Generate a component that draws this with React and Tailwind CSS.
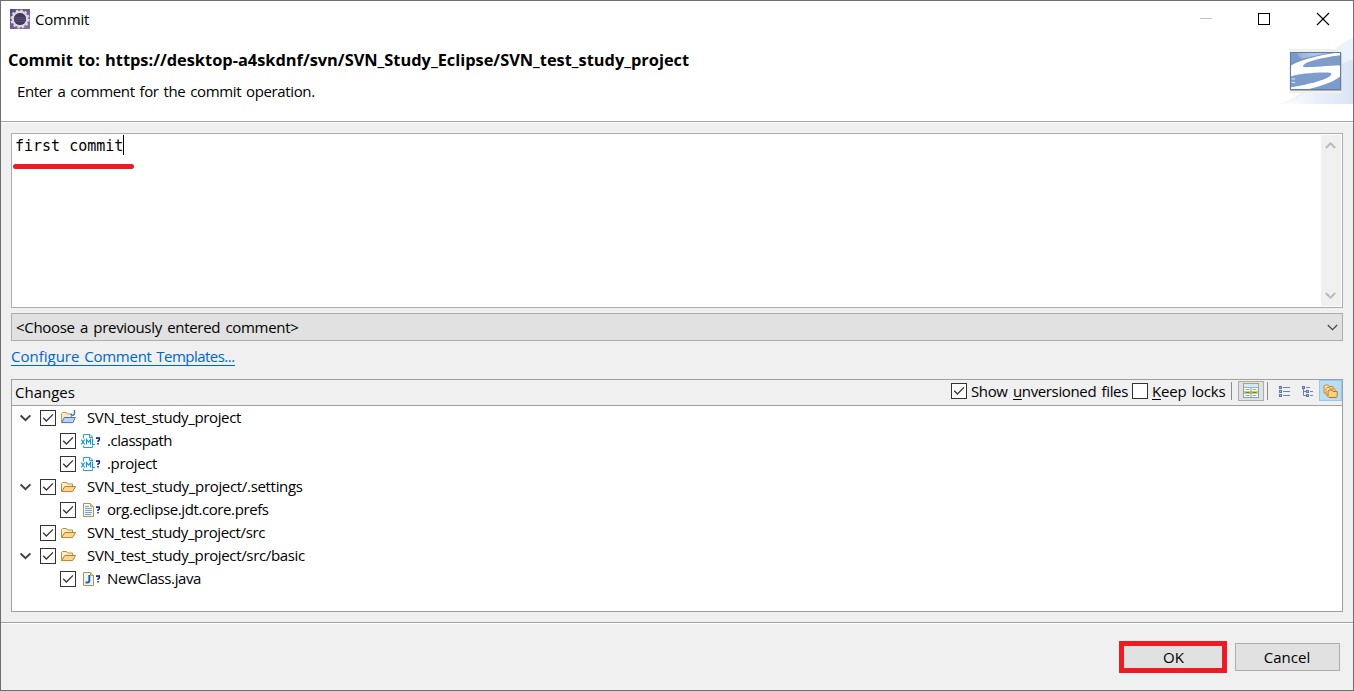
import React from "react";

const EclipseIcon = () => (
  <svg width="20" height="20" viewBox="0 0 20 20" className="shrink-0">
    <defs>
      <linearGradient id="ecl" x1="0" y1="0" x2="1" y2="1">
        <stop offset="0" stopColor="#54467a" />
        <stop offset="1" stopColor="#8a70b0" />
      </linearGradient>
    </defs>
    <rect width="20" height="20" fill="url(#ecl)" />
    <circle cx="10" cy="10" r="8.500" fill="none" stroke="#dcd6e0" strokeWidth="2.200" strokeDasharray="2.500 1.950" />
    <circle cx="10" cy="10" r="7.200" fill="none" stroke="#dedad8" strokeWidth="2.200" />
    <circle cx="10" cy="10" r="6.100" fill="#413a5e" />
    <path d="M4.600 8.600h10.800M4.300 10.500h11.400M4.900 12.400h10.200" stroke="#5d5680" strokeWidth=".8" />
  </svg>
);

const Banner = () => (
  <svg width="74" height="66" viewBox="0 0 74 66" className="shrink-0">
    <defs>
      <linearGradient id="bandA" x1="0" y1="0" x2="1" y2="0">
        <stop offset="0" stopColor="#ffffff" />
        <stop offset=".5" stopColor="#e9effa" />
        <stop offset="1" stopColor="#dbe4f6" />
      </linearGradient>
      <radialGradient id="shine" gradientUnits="userSpaceOnUse" cx="36" cy="12" r="22">
        <stop offset="0" stopColor="#bccae2" />
        <stop offset="1" stopColor="#8fa8d0" />
      </radialGradient>
      <clipPath id="logoClip"><rect x="12" y="15" width="49" height="36" /></clipPath>
    </defs>
    <path d="M74 0V66H0C34 60 42 10 74 0Z" fill="#edf2fc" />
    <path d="M74 22V66H2C32 62 50 26 74 22Z" fill="url(#bandA)" />
    <rect x="10" y="11" width="53" height="44" fill="#f1f0e9" />
    <rect x="11.500" y="15" width="51" height="38" fill="#b3b2ab" />
    <rect x="11" y="14" width="51" height="38" fill="#5c7cae" />
    <g clipPath="url(#logoClip)">
      <rect x="12" y="15" width="49" height="36" fill="#fff" />
      <path d="M11 14H62C44 17 25 20 11 28Z" fill="#7c98c7" />
      <path d="M18 14H56C40 17 29 19 23 21Q19 18 18 14Z" fill="url(#shine)" />
      <path d="M62 17C47 19 24 23 24 28.500C25 30.500 45 27.500 62 27.500Z" fill="#7f9bc9" />
      <path d="M11 38.500C23 35 38 34.500 49 34.500C54 35 53 37.500 48 40C39 44 24 47.500 11 49.500Z" fill="#7d9bcb" />
      <path d="M62 37.500C57 43 45 47.500 26 52H62Z" fill="#7d9bcb" />
      <path d="M12.500 41h3.500M12.500 44.500h3.500" stroke="#dfe8f6" strokeWidth="1.200" />
    </g>
  </svg>
);

const Chevron = () => (
  <svg width="12" height="8" viewBox="0 0 12 8" className="shrink-0">
    <path d="M.600 1.400 5.500 6.200 10.400 1.400" fill="none" stroke="#404040" strokeWidth="2" />
  </svg>
);

const Check = ({ on = true }) => (
  <span className="flex size-4 shrink-0 items-center justify-center border border-[#333] bg-white">
    {on && (
      <svg width="14" height="14" viewBox="0 0 14 14" className="shrink-0">
        <path d="M2.200 6.800 5.400 10 12 3.400" fill="none" stroke="#333" strokeWidth="1.300" />
      </svg>
    )}
  </span>
);

const Folder = () => (
  <svg width="18" height="16" viewBox="0 0 18 16" className="shrink-0">
    <path d="M1.500 12.500V4.500L2.500 3.500H6.500L7.500 5H12.500V7.500" fill="#fdf0c4" stroke="#c08a3e" />
    <path d="M1.600 12.600 4.800 7.500H15.600L12.600 12.600Z" fill="#fbd68e" stroke="#b97f35" strokeLinejoin="round" />
  </svg>
);

const ProjectFolder = () => (
  <svg width="18" height="16" viewBox="0 0 18 16" className="shrink-0">
    <path d="M1.500 12.500V3.500L2.500 2.500H6.500L7.500 4H11.500V7.500" fill="#fbe9c0" stroke="#c49a55" />
    <path d="M1.600 12.600 4.400 7.500H15.300L13 12.600Z" fill="#b9d2f7" stroke="#4a73b8" strokeLinejoin="round" />
    <path d="M14.500 0V3Q14.500 5.200 12.700 5.200 11 5.200 10.800 3.600" fill="none" stroke="#4576b5" strokeWidth="1.400" />
  </svg>
);

const Unknown = () => (
  <svg width="5" height="8" viewBox="0 0 5 8" className="shrink-0 self-center">
    <path d="M.700 2V.900H3.300V3L2 4V5M2 6V7.500" fill="none" stroke="#0b1f8f" strokeWidth="1.500" />
  </svg>
);

const XmlFile = () => (
  <svg width="14" height="14" viewBox="0 0 14 14" className="shrink-0">
    <path d="M2.500 4.500V.500H9L11.500 3V4.500M8.500 .500V3.500H11.500M2.500 11.500V13.500H11.500V11.500" fill="none" stroke="#2a9fd0" />
    <path d="M.300 5.500 3.700 10.500M3.700 5.500 .300 10.500" fill="none" stroke="#1795cc" strokeWidth="1.200" />
    <path d="M5.500 10.500V5.500L7.500 8 9.500 5.500V10.500M11.500 5V10.500H14" fill="none" stroke="#1795cc" strokeWidth="1.200" />
  </svg>
);

const TextFile = () => (
  <svg width="12" height="14" viewBox="0 0 12 14" className="shrink-0">
    <path d="M.500 .500H7.500L10.500 3.500V13.500H.500Z" fill="#f3f7fd" stroke="#a6985c" />
    <path d="M7.500 .500V3.500H10.500" fill="#e6d48f" stroke="#b7a45f" />
    <path d="M2 3.500H6M2 5.500H9M2 7.500H9M2 9.500H9M2 11.500H8" stroke="#7f9bd0" />
  </svg>
);

const JavaFile = () => (
  <svg width="12" height="14" viewBox="0 0 12 14" className="shrink-0">
    <path d="M.500 .500H7.500L10.500 3.500V13.500H.500Z" fill="#eaf3fc" stroke="#a6985c" />
    <path d="M7.500 .500V3.500H10.500" fill="#e6d48f" stroke="#b7a45f" />
    <path d="M6.300 3V8.500Q6.300 10.500 4.500 10.500H2.500" fill="none" stroke="#27639c" strokeWidth="1.900" />
  </svg>
);

const TableIcon = () => (
  <svg width="16" height="16" viewBox="0 0 16 16">
    <rect x=".5" y=".5" width="15" height="14" fill="#fff" stroke="#b5a46a" />
    <path d="M.500 5V14.500H15.500V5" fill="none" stroke="#7fa0c2" />
    <rect x="1" y="1" width="14" height="3" fill="#d5e9f2" />
    <path d="M1 4.500H15" stroke="#9db4c6" />
    <rect x="1" y="8" width="14" height="3" fill="#c3d06a" />
    <path d="M8 5V14" stroke="#7e9cbb" />
    <path d="M2.500 6.500H6.500M9.500 6.500H13.500M2.500 12.500H6.500M9.500 12.500H13.500" stroke="#8ba9c9" />
    <path d="M2.500 9.500H6.500M9.500 9.500H13.500" stroke="#74881f" />
  </svg>
);

const FlatIcon = () => (
  <svg width="13" height="12" viewBox="0 0 13 12">
    <path d="M4 1.500H11M4 5.500H11M4 9.500H11" stroke="#6c84b2" />
    <g fill="#a9b9d6" stroke="#5f78a8">
      <rect x=".5" y=".5" width="2" height="2" /><rect x=".5" y="4.500" width="2" height="2" /><rect x=".5" y="8.500" width="2" height="2" />
    </g>
  </svg>
);

const TreeIcon = () => (
  <svg width="13" height="12" viewBox="0 0 13 12">
    <path d="M4 1.500H8M1.500 3V9.500H4M1.500 5.500H4M8 5.500H11M8 9.500H11" fill="none" stroke="#6c84b2" />
    <g fill="#a9b9d6" stroke="#5f78a8">
      <rect x=".5" y=".5" width="2" height="2" /><rect x="4.500" y="4.500" width="2" height="2" /><rect x="4.500" y="8.500" width="2" height="2" />
    </g>
  </svg>
);

const FoldersIcon = () => (
  <svg width="16" height="15" viewBox="0 0 16 15">
    <path d="M1 9V2L2 1H5L6 2.500H10V9Z" fill="#fbdf9a" stroke="#c98c3c" />
    <path d="M3 11V4.500L4 3.500H6.500L7.500 5H12V11Z" fill="#fce6aa" stroke="#c98c3c" />
    <path d="M5 12.500V7L6 6H9L10 7.500H14.200V12.500L13.500 13.500H6Z" fill="#fbd27c" stroke="#b87428" />
  </svg>
);

const rows = [
  { open: true, icon: "project", label: "SVN_test_study_project", t: "tracking-[-0.36px]" },
  { child: true, icon: "xml", label: ".classpath", t: "tracking-[-0.46px]" },
  { child: true, icon: "xml", label: ".project", t: "tracking-[-0.37px]" },
  { open: true, icon: "folder", label: "SVN_test_study_project/.settings", t: "tracking-[-0.32px]" },
  { child: true, icon: "text", label: "org.eclipse.jdt.core.prefs", t: "tracking-[-0.40px]" },
  { icon: "folder", label: "SVN_test_study_project/src", t: "tracking-[-0.38px]" },
  { open: true, icon: "folder", label: "SVN_test_study_project/src/basic", t: "tracking-[-0.35px]" },
  { child: true, icon: "java", label: "NewClass.java", t: "tracking-[-0.39px]" },
];

const icons = { project: <ProjectFolder />, folder: <Folder />, xml: <XmlFile />, text: <TextFile />, java: <JavaFile /> };

const Row = ({ row }) => (
  <div className="flex h-[23px] items-center pl-2">
    <span className="flex w-5 shrink-0">{row.open && <Chevron />}</span>
    <span className={row.child ? "ml-5 flex" : "flex"}><Check /></span>
    <span className={row.child ? "flex w-[31px] shrink-0 items-center pl-[5px]" : "flex w-[31px] shrink-0 items-center pl-1"}>
      <span className={row.icon === "xml" ? "flex w-[15px] shrink-0 items-center" : row.child ? "flex w-[15px] shrink-0 items-center pl-[2px]" : "flex"}>{icons[row.icon]}</span>
      {row.child && <Unknown />}
    </span>
    <span className={`whitespace-nowrap pb-[2px] leading-5 ${row.t}`}>{row.label}</span>
  </div>
);

export default function App() {
  return (
    <div className="flex h-[691px] w-[1354px] flex-col overflow-hidden border border-[#6e6e6e] bg-[#f0f0f0] font-['Open_Sans','Noto_Sans',sans-serif] text-[15px] text-black">
      <header className="flex h-[120px] shrink-0 flex-col bg-white">
        <div className="flex h-9 items-center justify-between pl-[9px] pr-[23px]">
          <div className="flex items-center gap-[5px]">
            <EclipseIcon />
            <span className="leading-5 tracking-[-0.2px]">Commit</span>
          </div>
          <div className="flex items-center">
            <svg width="130" height="14" viewBox="0 0 130 14">
              <path d="M0 6.500H12" stroke="#c4c4c4" />
              <rect x="58.500" y="1.500" width="11" height="11" fill="none" stroke="#000" />
              <path d="M117 1 129 13M129 1 117 13" stroke="#000" strokeWidth="1.100" />
            </svg>
          </div>
        </div>
        <div className="flex justify-between">
          <div className="flex flex-col pl-[7px] pt-3">
            <h1 className="whitespace-nowrap text-[16.4px] font-bold leading-[22px] tracking-[-0.01px] [word-spacing:0.9px]">
              Commit to: https://desktop-a4skdnf/svn/SVN_Study_Eclipse/SVN_test_study_project
            </h1>
            <p className="pl-[9px] pt-[10px] leading-5 tracking-[-0.37px] [word-spacing:1.35px]">Enter a comment for the commit operation.</p>
          </div>
          <div className="pt-px"><Banner /></div>
        </div>
      </header>
      <div className="h-0.5 shrink-0 border-t border-[#a0a0a0] bg-white" />

      <main className="flex flex-col px-[10px] pt-[10px]">
        <div className="flex h-[175px] justify-between border border-[#abadb3] bg-white p-px">
          <div className="flex flex-col">
            <div className="flex h-5 items-center pl-0.5">
              <span className="whitespace-pre pt-[2px] font-['DejaVu_Sans_Mono',monospace] leading-5">first commit</span>
              <span className="h-5 w-px bg-black" />
            </div>
            <span className="mt-[9px] h-[5px] w-[121px] rounded-full bg-[#ed1c24]" />
          </div>
          <div className="flex w-5 flex-col items-center justify-between bg-[#f0f0f0] py-[7px] pr-[2px]">
            <svg width="11" height="7" viewBox="0 0 11 7"><path d="M.800 6 5.500 1.300 10.200 6" fill="none" stroke="#b9b9b9" strokeWidth="1.900" /></svg>
            <svg width="11" height="7" viewBox="0 0 11 7"><path d="M.800 1 5.500 5.700 10.200 1" fill="none" stroke="#b9b9b9" strokeWidth="1.900" /></svg>
          </div>
        </div>

        <div className="mt-[5px] flex h-7 items-center justify-between border border-[#adadad] bg-[#e1e1e1] pl-1 pr-1">
          <span className="leading-5 tracking-[-0.32px] [word-spacing:1.8px]">&lt;Choose a previously entered comment&gt;</span>
          <svg width="11" height="7" viewBox="0 0 11 7"><path d="M.800 1 5.500 5.700 10.200 1" fill="none" stroke="#404040" strokeWidth="1.100" /></svg>
        </div>

        <div className="mt-[6px] flex h-[19px]">
          <a className="flex h-[19px] items-center border-b border-[#0066cc] text-[#0066cc]">
            <span className="whitespace-pre [word-spacing:1px]">Configure </span>
            <span className="whitespace-pre tracking-[-0.27px] [word-spacing:1px]">Comment </span>
            <span className="tracking-[-0.52px]">Templates...</span>
          </a>
        </div>

        <section className="mt-[13px] flex h-[233px] flex-col border border-[#a0a0a0] bg-white">
          <div className="flex h-[26px] shrink-0 items-start justify-between border-b border-[#a0a0a0] bg-[#f0f0f0] pl-[3px]">
            <span className="pt-[2px] leading-5">Changes</span>
            <div className="flex items-start">
              <label className="flex w-[181px] items-start gap-1 whitespace-nowrap pt-[3px] leading-4 tracking-[-0.36px] [word-spacing:1.8px]">
                <Check />
                <span>Show <u className="underline-offset-2">u</u>nversioned files</span>
              </label>
              <label className="flex w-[98px] items-start gap-1 whitespace-nowrap pt-[3px] leading-4 tracking-[-0.2px] [word-spacing:1.3px]">
                <Check on={false} />
                <span><u className="underline-offset-2">K</u>eep locks</span>
              </label>
              <span className="ml-px mt-[2px] h-[18px] w-px bg-[#8c8c8c]" />
              <span className="ml-[6px] mt-px flex h-5 w-[26px] items-center justify-center border border-[#adadad] bg-[#e1e1e1]"><TableIcon /></span>
              <span className="ml-[3px] mt-[2px] h-[18px] w-px bg-[#8c8c8c]" />
              <span className="ml-[11px] mt-[6px]"><FlatIcon /></span>
              <span className="ml-[10px] mt-[6px]"><TreeIcon /></span>
              <span className="ml-1 flex h-[21px] w-[23px] items-center justify-center border border-[#90c8f6] bg-[#bcdcf4] pl-px pt-px"><FoldersIcon /></span>
            </div>
          </div>
          <div className="flex flex-col">
            {rows.map((r) => <Row key={r.label} row={r} />)}
          </div>
        </section>
      </main>

      <div className="mt-[10px] h-0.5 shrink-0 border-t border-[#a0a0a0] bg-white" />
      <footer className="flex items-center justify-end gap-2 pr-[13px] pt-[17px]">
        <button className="flex h-8 w-[108px] items-center justify-center border-[5px] border-[#ed1c24] bg-[#e1e1e1] pl-px leading-5">OK</button>
        <button className="flex h-7 w-[105px] items-center justify-center border border-[#adadad] bg-[#e1e1e1] pr-px leading-5">Cancel</button>
      </footer>
    </div>
  );
}
